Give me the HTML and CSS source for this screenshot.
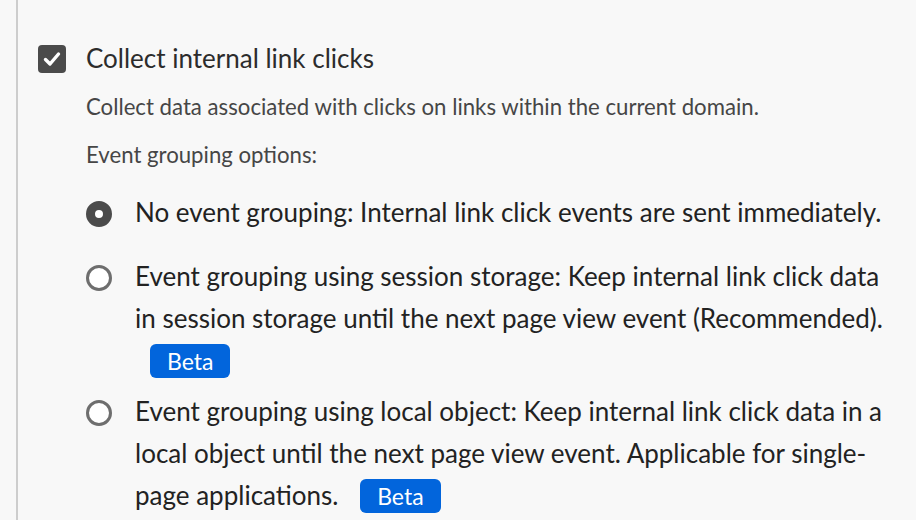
FILE: index.html
```html
<!DOCTYPE html>
<html lang="en">
<head>
<meta charset="utf-8">
<link rel="stylesheet" href="styles.css">
</head>
<body>
<div class="page">
  <div class="content">
    <div class="check-row">
      <span class="checkbox">
        <svg viewBox="0 0 28 28" width="28" height="28"><rect x="0" y="0" width="28" height="28" rx="4" fill="#4b4b4b"/><path d="M7.5 14.5 L12 19 L20.5 9" fill="none" stroke="#fff" stroke-width="3.4" stroke-linecap="round" stroke-linejoin="round"/></svg>
      </span>
      <span class="check-label">Collect internal link clicks</span>
    </div>
    <div class="details">
      <p class="desc">Collect data associated with clicks on links within the current domain.</p>
      <p class="desc group-label">Event grouping options:</p>
      <div class="radios">
        <div class="radio-row">
          <span class="radio checked"></span>
          <span class="radio-label">No event grouping: Internal link click events are sent immediately.</span>
        </div>
        <div class="radio-row second">
          <span class="radio"></span>
          <span class="radio-label">Event grouping using session storage: Keep internal link click data in session storage until the next page view event (Recommended). <span class="badge">Beta</span></span>
        </div>
        <div class="radio-row third">
          <span class="radio"></span>
          <span class="radio-label">Event grouping using local object: Keep internal link click data in a local object until the next page view event. Applicable for single-page applications. <span class="badge">Beta</span></span>
        </div>
      </div>
    </div>
  </div>
</div>
</body>
</html>
```

FILE: styles.css
```css
html, body {
  margin: 0;
  padding: 0;
  background: #f8f8f8;
  font-family: Lato, "Noto Sans", sans-serif;
}
.page {
  padding-left: 16px;
  height: 520px;
  overflow: hidden;
}
.content {
  border-left: 2px solid #cdcdcd;
  padding-left: 20px;
  padding-right: 14px;
  padding-top: 45px;
  height: 100%;
  box-sizing: border-box;
}
.check-row {
  display: flex;
  align-items: center;
  gap: 20px;
  height: 28px;
}
.checkbox {
  width: 28px;
  height: 28px;
  display: block;
}
.checkbox svg { display: block; }
.check-label {
  font-size: 26px;
  line-height: 28px;
  color: #2c2c2c;
  margin-top: -3px;
}
.details {
  padding-left: 48px;
  padding-top: 20px;
}
.desc {
  margin: 0;
  font-size: 22.2px;
  line-height: 28px;
  color: #464646;
}
.group-label {
  margin-top: 20px;
}
.radios {
  margin-top: 24px;
  display: flex;
  flex-direction: column;
}
.radio-row {
  display: flex;
  align-items: flex-start;
  gap: 23px;
}
.radio-row.second {
  margin-top: 24px;
}
.radio-row.third {
  margin-top: 11px;
}
.radio {
  flex: none;
  width: 26px;
  height: 26px;
  box-sizing: border-box;
  border-radius: 50%;
  border: 3px solid #6e6e6e;
  background: #fff;
  margin-top: 8px;
}
.radio.checked {
  border: 9px solid #4b4b4b;
}
.radio-label {
  flex: 1;
  font-size: 26px;
  line-height: 42px;
  color: #222;
  margin-top: -2px;
}
.badge {
  display: inline-block;
  margin-left: 15px;
  background: #0265dc;
  color: #fff;
  font-size: 23px;
  line-height: 34px;
  height: 34px;
  padding: 0 17px;
  border-radius: 6px;
  vertical-align: baseline;
}
```
